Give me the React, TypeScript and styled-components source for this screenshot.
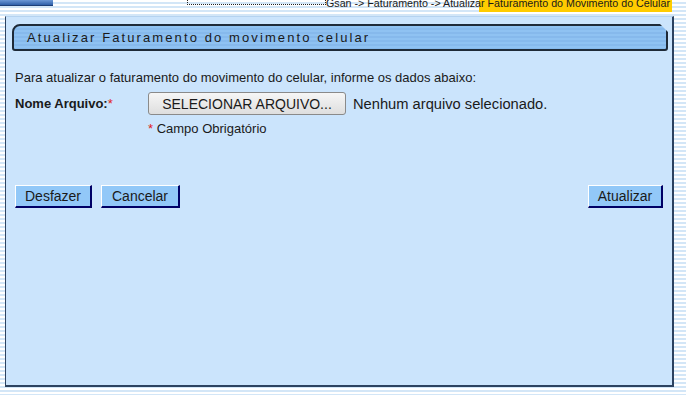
import React from "react";
import styled, { createGlobalStyle } from "styled-components";

const GlobalStyle = createGlobalStyle`
  html, body {
    margin: 0;
    padding: 0;
  }
  body {
    width: 686px;
    height: 395px;
    overflow: hidden;
    font-family: "Liberation Sans", Arial, sans-serif;
    background: repeating-linear-gradient(
      to bottom,
      #ffffff 0px,
      #ffffff 2px,
      #d3e6f7 2px,
      #d3e6f7 4px
    );
  }
`;

const Page = styled.div`
  width: 686px;
  height: 395px;
  display: flex;
  flex-direction: column;
`;

const TopBar = styled.div`
  width: 686px;
  height: 16px;
  display: flex;
  align-items: flex-start;
  background: linear-gradient(
    to right,
    transparent 479px,
    #ffcc00 479px,
    #ffcc00 672px,
    transparent 672px
  ) no-repeat 0 0 / 686px 12px;
`;

const LogoStrip = styled.div`
  width: 53px;
  height: 5px;
  background: linear-gradient(to bottom, #6d98d6, #2f5fa8);
  border-bottom: 1px solid #1d3f78;
`;

const DottedBox = styled.div`
  margin-left: 134px;
  width: 137px;
  height: 4px;
  border: 1px dotted #222;
  border-top: none;
`;

const Crumbs = styled.div`
  margin-top: -2px;
  font-size: 10.7px;
  line-height: 11px;
  color: #1a1a1a;
  white-space: nowrap;
`;

const Panel = styled.div`
  margin-left: 5px;
  width: 669px;
  height: 371px;
  box-sizing: border-box;
  background: #cbe4fc;
  border: 1px solid #2c4260;
  border-top-color: #b5d3f0;
  border-width: 1px 2px 2px 1px;
  padding: 7px 4px 0 6px;
`;

const TitleBar = styled.div`
  height: 27px;
  box-sizing: border-box;
  border: 2px solid #1e2a38;
  border-radius: 8px 0 3px 3px;
  background: repeating-linear-gradient(
    to bottom,
    #8fc2f2 0px,
    #8fc2f2 2px,
    #86b9ec 2px,
    #86b9ec 4px
  );
  clip-path: polygon(0 0, calc(100% - 8px) 0, 100% 8px, 100% 100%, 0 100%);
  position: relative;
  display: flex;
  align-items: center;
  padding-left: 13px;
  font-size: 13px;
  letter-spacing: 2.1px;
  color: #1a1a1a;
`;

const Corner = styled.span`
  position: absolute;
  right: -2px;
  top: -2px;
  width: 13px;
  height: 2px;
  background: #1e2a38;
  transform-origin: right top;
  transform: translate(-9px, 0) rotate(45deg);
`;

const Body = styled.div`
  padding: 20px 0 0 3px;
  font-size: 13px;
  color: #1a1a1a;
`;

const Intro = styled.div`
  line-height: 14px;
`;

const FieldRow = styled.div`
  margin-top: 7px;
  display: flex;
  align-items: center;
  height: 23px;
`;

const Label = styled.div`
  width: 133px;
  font-weight: bold;
  font-size: 13px;
`;

const Req = styled.span`
  color: #e02020;
  font-weight: normal;
`;

const FileButton = styled.button`
  width: 198px;
  height: 23px;
  padding: 0;
  font-family: "Liberation Sans", Arial, sans-serif;
  font-size: 14px;
  color: #1a1a1a;
  border: 1px solid #8a8a8a;
  border-radius: 3px;
  background: linear-gradient(to bottom, #f6f6f6, #dedede);
`;

const FileStatus = styled.span`
  margin-left: 7px;
  font-size: 14.7px;
`;

const Note = styled.div`
  margin: 7px 0 0 133px;
  line-height: 14px;
  font-size: 13px;
`;

const Actions = styled.div`
  margin-top: 49px;
  display: flex;
  align-items: center;
  padding-right: 5px;
`;

const ActionButton = styled.button<{ $w: number; $push?: boolean }>`
  width: ${(p) => p.$w}px;
  height: 23px;
  padding: 0;
  margin-right: 9px;
  margin-left: ${(p) => (p.$push ? "auto" : "0")};
  font-family: "Liberation Sans", Arial, sans-serif;
  font-size: 14px;
  color: #1a1a1a;
  background: #92c8f8;
  border: 1px solid;
  border-color: #ffffff #000066 #000066 #ffffff;
  border-width: 1px 2px 2px 1px;
  &:last-child {
    margin-right: 0;
  }
`;

export default function App() {
  return (
    <Page>
      <GlobalStyle />
      <TopBar>
        <LogoStrip />
        <DottedBox />
        <Crumbs>Gsan -&gt; Faturamento -&gt; Atualizar Faturamento do Movimento do Celular</Crumbs>
      </TopBar>
      <Panel>
        <TitleBar>
          Atualizar Faturamento do movimento celular
          <Corner />
        </TitleBar>
        <Body>
          <Intro>Para atualizar o faturamento do movimento do celular, informe os dados abaixo:</Intro>
          <FieldRow>
            <Label>
              Nome Arquivo:<Req>*</Req>
            </Label>
            <FileButton>SELECIONAR ARQUIVO...</FileButton>
            <FileStatus>Nenhum arquivo selecionado.</FileStatus>
          </FieldRow>
          <Note>
            <Req>*</Req> Campo Obrigatório
          </Note>
          <Actions>
            <ActionButton $w={77}>Desfazer</ActionButton>
            <ActionButton $w={79}>Cancelar</ActionButton>
            <ActionButton $w={75} $push>
              Atualizar
            </ActionButton>
          </Actions>
        </Body>
      </Panel>
    </Page>
  );
}
